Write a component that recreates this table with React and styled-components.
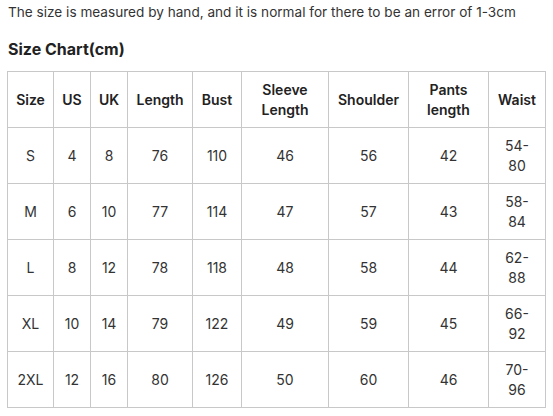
import React from "react";
import styled, { createGlobalStyle } from "styled-components";

const Global = createGlobalStyle`
  html, body { margin: 0; padding: 0; background: #fff; }
  body { font-family: Inter, "Noto Sans", sans-serif; color: #333; }
`;

const Page = styled.div`
  padding: 2px 7px 0 7px;
`;

const Notice = styled.p`
  margin: 0;
  padding-left: 1px;
  font-size: 13.6px;
  line-height: 20px;
  color: #333;
`;

const Title = styled.h2`
  margin: 15px 0 10px;
  padding-left: 1px;
  font-size: 16px;
  line-height: 24px;
  font-weight: 700;
  color: #222;
`;

const Table = styled.table`
  border-collapse: collapse;
  table-layout: fixed;
  width: 539px;
`;

const Cell = styled.td`
  border: 1px solid #c8c8c8;
  height: 39px;
  padding: 7.5px 4px;
  text-align: center;
  vertical-align: middle;
  font-size: 14px;
  line-height: 20px;
  font-weight: ${(p) => (p.$head ? 600 : 400)};
  color: ${(p) => (p.$head ? "#222" : "#333")};
`;

const widths = [46, 37, 37, 65, 49, 87, 80, 80, 57];
const headers = ["Size", "US", "UK", "Length", "Bust", ["Sleeve", "Length"], "Shoulder", ["Pants", "length"], "Waist"];
const rows = [
  ["S", "4", "8", "76", "110", "46", "56", "42", ["54-", "80"]],
  ["M", "6", "10", "77", "114", "47", "57", "43", ["58-", "84"]],
  ["L", "8", "12", "78", "118", "48", "58", "44", ["62-", "88"]],
  ["XL", "10", "14", "79", "122", "49", "59", "45", ["66-", "92"]],
  ["2XL", "12", "16", "80", "126", "50", "60", "46", ["70-", "96"]],
];

const content = (v) =>
  Array.isArray(v) ? (
    <>
      {v[0]}
      <br />
      {v[1]}
    </>
  ) : (
    v
  );

export default function App() {
  return (
    <Page>
      <Global />
      <Notice>The size is measured by hand, and it is normal for there to be an error of 1-3cm</Notice>
      <Title>Size Chart(cm)</Title>
      <Table>
        <colgroup>
          {widths.map((w, i) => (
            <col key={i} style={{ width: w }} />
          ))}
        </colgroup>
        <tbody>
          <tr>
            {headers.map((h, i) => (
              <Cell as="th" $head key={i}>
                {content(h)}
              </Cell>
            ))}
          </tr>
          {rows.map((r, ri) => (
            <tr key={ri}>
              {r.map((c, ci) => (
                <Cell key={ci}>{content(c)}</Cell>
              ))}
            </tr>
          ))}
        </tbody>
      </Table>
    </Page>
  );
}
